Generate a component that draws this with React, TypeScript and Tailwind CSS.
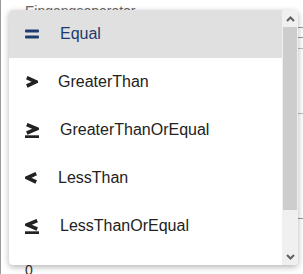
import React from "react";

type Op = { name: string; icon: React.ReactNode };

const navy = "#1e3a6e";
const ink = "#222222";

function EqualIcon() {
  return (
    <svg width="14" height="10" viewBox="0 0 14 10">
      <rect x="0" y="0.5" width="14" height="3" rx="1" fill={navy} />
      <rect x="0" y="6.5" width="14" height="3" rx="1" fill={navy} />
    </svg>
  );
}

// heavy chevron, optionally with an underline bar (≥ / ≤)
function ChevronIcon({ dir, bar }: { dir: "gt" | "lt"; bar?: boolean }) {
  const w = bar ? 14 : 13;
  const h = bar ? 15 : 12;
  const pts =
    dir === "gt"
      ? `1.8,1.6 ${w - 2.2},5.8 1.8,10`
      : `${w - 1.8},1.6 2.2,5.8 ${w - 1.8},10`;
  return (
    <svg width={w} height={h} viewBox={`0 0 ${w} ${h}`}>
      <polyline points={pts} fill="none" stroke={ink} strokeWidth="3.6" strokeLinejoin="miter" strokeMiterlimit="4" />
      {bar && <rect x="0" y="12.3" width={w} height="2.7" fill={ink} />}
    </svg>
  );
}

const ops: Op[] = [
  { name: "Equal", icon: <EqualIcon /> },
  { name: "GreaterThan", icon: <ChevronIcon dir="gt" /> },
  { name: "GreaterThanOrEqual", icon: <ChevronIcon dir="gt" bar /> },
  { name: "LessThan", icon: <ChevronIcon dir="lt" /> },
  { name: "LessThanOrEqual", icon: <ChevronIcon dir="lt" bar /> },
];

export default function App() {
  return (
    <div
      className="relative w-[303px] h-[274px] overflow-hidden bg-white"
      style={{ fontFamily: '"Liberation Sans", Arial, sans-serif' }}
    >
      {/* Background form behind the dropdown */}
      <div className="h-full flex flex-col border-l border-[#9a9a9a]">
        <div className="pl-[24px] pt-[3px] text-[14px] leading-[16px] text-[#666]">Eingangsoperator</div>
        <div className="flex-1 flex flex-col items-end">
          <div className="mt-[8px] w-[8px] h-[11px] border-y border-[#9a9a9a]" />
          <div className="mt-[10px] w-[6px] border-t border-[#bdbdbd]" />
          <div className="mt-[64px] w-[6px] border-t border-[#bdbdbd]" />
          <div className="mt-[104px] w-[6px] border-t border-[#9a9a9a]" />
        </div>
        <div className="pl-[24px] h-[12px] text-[14px] leading-[16px] text-[#333]">0</div>
      </div>

      {/* Dropdown menu */}
      <div className="absolute left-[9px] top-[10px] w-[289px] h-[255px] flex overflow-hidden rounded-[4px] bg-white shadow-[0_2px_6px_rgba(0,0,0,0.3)]">
        <ul className="flex-1 overflow-hidden">
          {ops.map((op, i) => (
            <li
              key={op.name}
              className={`h-[48px] flex items-center pl-[16px] text-[16px] ${
                i === 0 ? "bg-[#e0e0e0] text-[#1e3a6e]" : "text-[#222]"
              }`}
            >
              <span className="flex items-center">{op.icon}</span>
              <span className={op.icon && (i === 1 || i === 3) ? "ml-[20px]" : "ml-[21px]"}>{op.name}</span>
            </li>
          ))}
        </ul>
        <div className="w-[16px] flex flex-col bg-[#f0f0f0]">
          <div className="h-[17px] flex items-center justify-center">
            <svg width="9" height="6" viewBox="0 0 9 6">
              <polyline points="1,5 4.5,1.5 8,5" fill="none" stroke="#606060" strokeWidth="2" />
            </svg>
          </div>
          <div className="h-[183px] mx-px bg-[#cdcdcd]" />
          <div className="flex-1 flex items-end justify-center pb-[5px]">
            <svg width="9" height="6" viewBox="0 0 9 6">
              <polyline points="1,1 4.5,4.5 8,1" fill="none" stroke="#606060" strokeWidth="2" />
            </svg>
          </div>
        </div>
      </div>
    </div>
  );
}
